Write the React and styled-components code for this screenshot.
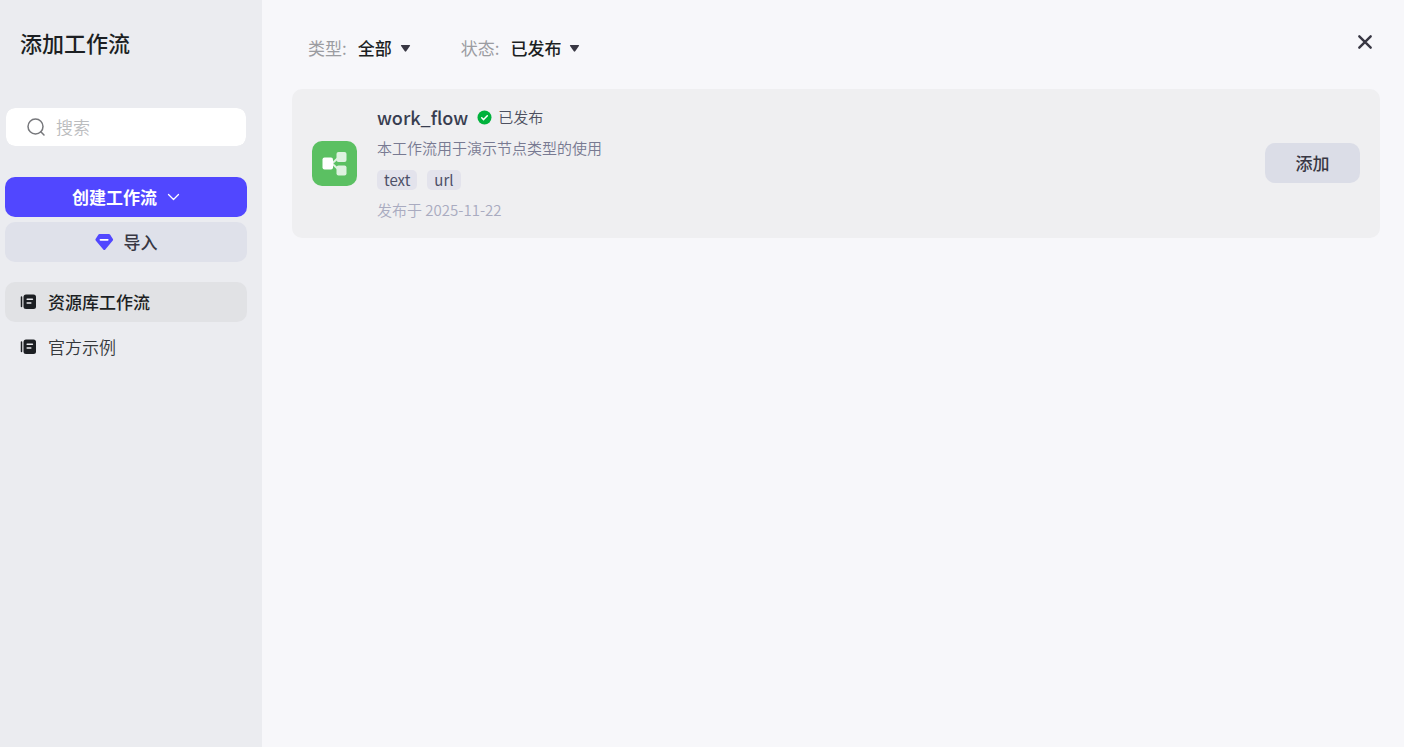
import React from "react";
import styled, { createGlobalStyle } from "styled-components";

const GlobalStyle = createGlobalStyle`
  *, *::before, *::after { box-sizing: border-box; }
  body {
    margin: 0;
    background: #f7f7fa;
    color: #1c1f23;
    font-family: "Noto Sans CJK SC", "Noto Sans", sans-serif;
    font-size: 17px;
    line-height: 24px;
  }
  button, input, select { font: inherit; color: inherit; border: 0; margin: 0; padding: 0; }
  button, select { cursor: pointer; }
  h1, h2, p, ul { margin: 0; padding: 0; }
`;

const Page = styled.div`
  display: flex;
  min-height: 100vh;
`;

const Sidebar = styled.aside`
  flex: 0 0 262px;
  min-width: 0;
  display: flex;
  flex-direction: column;
  padding: 26px 15px 20px 5px;
  background: #ebecf0;
`;

const Title = styled.h1`
  padding-left: 15px;
  font-size: 22px;
  line-height: 32px;
  font-weight: 500;
`;

const SearchBox = styled.label`
  display: flex;
  align-items: center;
  gap: 10px;
  height: 40px;
  margin-top: 49px;
  padding: 0 20px;
  border: 1px solid #ebecf0;
  border-radius: 10px;
  background: #fff;
  background-clip: padding-box;
  color: #77787c;
`;

const SearchInput = styled.input`
  flex: 1;
  min-width: 0;
  background: none;
  outline: none;
  font-weight: 350;
  color: #1c1f23;
  &::placeholder { color: #bbbcbe; opacity: 1; }
`;

const Actions = styled.div`
  display: flex;
  flex-direction: column;
  gap: 5px;
  margin-top: 30px;
`;

const ActionButton = styled.button`
  display: flex;
  align-items: center;
  justify-content: center;
  gap: 10px;
  height: 40px;
  border-radius: 10px;
  background: ${(p) => (p.$primary ? "#5147ff" : "#dfe1ea")};
  color: ${(p) => (p.$primary ? "#fff" : "#383743")};
  font-weight: ${(p) => (p.$primary ? 700 : 500)};
`;

const NavList = styled.ul`
  display: flex;
  flex-direction: column;
  gap: 5px;
  margin-top: 20px;
  list-style: none;
`;

const NavLink = styled.a`
  display: flex;
  align-items: center;
  gap: 12px;
  height: 40px;
  padding: 0 15px;
  border-radius: 10px;
  background: ${(p) => (p.$active ? "#e1e2e5" : "transparent")};
  color: ${(p) => (p.$active ? "#1c1f23" : "#34373b")};
  font-weight: ${(p) => (p.$active ? 500 : 350)};
  text-decoration: none;
`;

const Main = styled.main`
  flex: 1;
  min-width: 0;
  padding: 24px 24px 24px 30px;
`;

const TopBar = styled.header`
  display: flex;
  align-items: flex-start;
  justify-content: space-between;
  height: 65px;
  padding-left: 16px;
`;

const Filters = styled.div`
  display: flex;
  gap: 50px;
  padding-top: 12px;
`;

const Filter = styled.label`
  display: flex;
  align-items: center;
  color: #9b9ca1;
  height: 24px;
`;

const FilterSelect = styled.select`
  appearance: none;
  field-sizing: content;
  margin: 0 8px 0 11px;
  background: none;
  color: #1c1f23;
  font-weight: 500;
`;

const CloseButton = styled.button`
  display: grid;
  place-items: center;
  width: 30px;
  height: 36px;
  background: none;
  color: #383743;
`;

const Card = styled.article`
  display: flex;
  align-items: center;
  gap: 20px;
  padding: 15px 20px 16px;
  border-radius: 10px;
  background: #efeff1;
`;

const CardBody = styled.div`
  flex: 1;
  min-width: 0;
  font-size: 15px;
`;

const CardHead = styled.div`
  display: flex;
  align-items: center;
  gap: 9px;
`;

const CardName = styled.h2`
  font-size: 18px;
  font-weight: 500;
  line-height: 26px;
  color: #383d50;
`;

const Status = styled.span`
  display: flex;
  align-items: center;
  gap: 6px;
  color: #4d5060;
  font-weight: 350;
`;

const Description = styled.p`
  margin-top: 6px;
  color: #787a92;
  font-weight: 350;
`;

const Tags = styled.div`
  display: flex;
  gap: 10px;
  margin: 10px 0 8px;
`;

const Tag = styled.span`
  padding: 0 7px;
  border-radius: 5px;
  background: #e3e3ec;
  color: #4d5068;
  line-height: 20px;
`;

const PublishDate = styled.p`
  color: #a9abc0;
  font-weight: 350;
`;

const AddButton = styled.button`
  width: 95px;
  height: 40px;
  border-radius: 10px;
  background: #dbdde7;
  color: #383743;
  font-weight: 500;
`;

const SearchIcon = () => (
  <svg width="20" height="20" viewBox="0 0 20 20" fill="none" stroke="currentColor" strokeWidth="1.5" strokeLinecap="round" aria-hidden="true">
    <circle cx="9.5" cy="9.5" r="7.5" />
    <path d="M14.8 14.8 18 18" />
  </svg>
);

const ChevronIcon = () => (
  <svg width="13" height="8" viewBox="0 0 13 8" fill="none" stroke="currentColor" strokeWidth="1.3" strokeLinecap="round" strokeLinejoin="round" aria-hidden="true">
    <path d="M1.5 1.5 6.5 6.5 11.5 1.5" />
  </svg>
);

const GemIcon = () => (
  <svg width="19" height="18" viewBox="0 0 19 18" aria-hidden="true">
    <path d="M4.6 1h9.3q.8 0 1.3.7l2.7 4.2q.5.8-.1 1.5l-7.500 9.100q-1 1-2 0L.7 7.4Q.1 6.7.6 5.9L3.3 1.7Q3.8 1 4.6 1Z" fill="#5147ff" />
    <path d="M5.500 6.800h7.200" stroke="#fff" strokeWidth="1.8" strokeLinecap="round" />
  </svg>
);

const LibraryIcon = () => (
  <svg width="16" height="16" viewBox="0 0 16 16" aria-hidden="true">
    <path d="M1.5 3v9.500" stroke="#1c1f23" strokeWidth="1.5" strokeLinecap="round" />
    <rect x="3.5" y="0.5" width="12.5" height="14.5" rx="2.5" fill="#1c1f23" />
    <path d="M7.2 5.3h5.200M7.2 9h3.600" stroke="#ebecf0" strokeWidth="1.6" strokeLinecap="round" />
  </svg>
);

const CaretIcon = () => (
  <svg width="11" height="9" viewBox="0 0 11 9" aria-hidden="true">
    <path d="M1.5 1h8q1 0 .4.9L6.2 7.3q-.7.9-1.4 0L1.1 1.9Q.5 1 1.5 1Z" fill="#383743" />
  </svg>
);

const CloseIcon = () => (
  <svg width="16" height="16" viewBox="0 0 16 16" fill="none" stroke="currentColor" strokeWidth="2.4" strokeLinecap="round" aria-hidden="true">
    <path d="M2.3 2.3 13.7 13.7M13.7 2.3 2.3 13.7" />
  </svg>
);

const CheckIcon = () => (
  <svg width="15" height="15" viewBox="0 0 15 15" fill="none" aria-hidden="true">
    <circle cx="7.5" cy="7.5" r="7" fill="#00b23c" />
    <path d="M4.7 7.7 6.6 9.6 10.3 5.7" stroke="#fff" strokeWidth="1.5" strokeLinecap="round" strokeLinejoin="round" />
  </svg>
);

const WorkflowIcon = () => (
  <svg width="45" height="45" viewBox="0 0 45 45" aria-hidden="true">
    <rect width="45" height="45" rx="10" fill="#5bc062" />
    <path d="M20 22.5 26 17M20 22.5 26 28" stroke="#def2e0" strokeWidth="2" fill="none" />
    <rect x="24.5" y="11" width="10" height="10" rx="2" fill="#def2e0" />
    <rect x="24.5" y="24.5" width="10" height="10" rx="2" fill="#def2e0" />
    <rect x="10.5" y="16.5" width="10.5" height="12" rx="2" fill="#fff" />
  </svg>
);

const filters = [
  { label: "类型", value: "全部" },
  { label: "状态", value: "已发布" },
];

const navItems = [
  { label: "资源库工作流", active: true },
  { label: "官方示例", active: false },
];

export default function App() {
  return (
    <>
      <GlobalStyle />
      <Page>
        <Sidebar>
          <Title>添加工作流</Title>
          <SearchBox>
            <SearchIcon />
            <SearchInput type="text" placeholder="搜索" aria-label="搜索" />
          </SearchBox>
          <Actions>
            <ActionButton type="button" $primary>
              创建工作流
              <ChevronIcon />
            </ActionButton>
            <ActionButton type="button">
              <GemIcon />
              导入
            </ActionButton>
          </Actions>
          <nav>
            <NavList>
              {navItems.map((item) => (
                <li key={item.label}>
                  <NavLink href="#" $active={item.active}>
                    <LibraryIcon />
                    {item.label}
                  </NavLink>
                </li>
              ))}
            </NavList>
          </nav>
        </Sidebar>
        <Main>
          <TopBar>
            <Filters>
              {filters.map((f) => (
                <Filter key={f.label}>
                  {f.label}:
                  <FilterSelect>
                    <option>{f.value}</option>
                  </FilterSelect>
                  <CaretIcon />
                </Filter>
              ))}
            </Filters>
            <CloseButton type="button" aria-label="关闭">
              <CloseIcon />
            </CloseButton>
          </TopBar>
          <Card>
            <WorkflowIcon />
            <CardBody>
              <CardHead>
                <CardName>work_flow</CardName>
                <Status>
                  <CheckIcon />
                  已发布
                </Status>
              </CardHead>
              <Description>本工作流用于演示节点类型的使用</Description>
              <Tags>
                <Tag>text</Tag>
                <Tag>url</Tag>
              </Tags>
              <PublishDate>发布于 2025-11-22</PublishDate>
            </CardBody>
            <AddButton type="button">添加</AddButton>
          </Card>
        </Main>
      </Page>
    </>
  );
}
